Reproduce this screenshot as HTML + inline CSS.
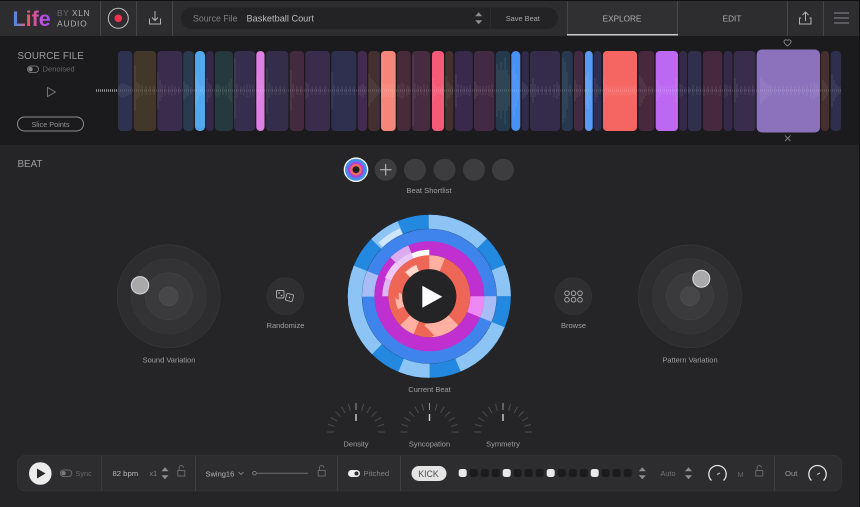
<!DOCTYPE html>
<html><head><meta charset="utf-8"><title>Life</title>
<style>
html,body{margin:0;padding:0;background:#252527;width:860px;height:507px;overflow:hidden}
svg{display:block;filter:blur(.3px)}
text{font-family:"Liberation Sans",sans-serif;font-size:7.5px;fill:#a0a0a2}
.m{text-anchor:middle}
</style></head><body>
<svg width="860" height="507" viewBox="0 0 860 507" xmlns="http://www.w3.org/2000/svg">
<defs>
<linearGradient id="lg" gradientUnits="userSpaceOnUse" x1="13" y1="0" x2="50" y2="0"><stop offset="0" stop-color="#3f8fe8"/><stop offset=".2" stop-color="#8a78c0"/><stop offset=".34" stop-color="#e0606a"/><stop offset=".52" stop-color="#e0507a"/><stop offset=".72" stop-color="#c84fd8"/><stop offset="1" stop-color="#9a50ee"/></linearGradient>
<g id="g" stroke="#4e4e50" stroke-width="1" fill="none">
<path d="M-29 0h7M29 0h-7"/>
<path transform="rotate(-75)" d="M0-29v7"/><path transform="rotate(-60)" d="M0-29v7"/><path transform="rotate(-45)" d="M0-29v7"/><path transform="rotate(-30)" d="M0-29v7"/><path transform="rotate(-15)" d="M0-29v7"/>
<path transform="rotate(15)" d="M0-29v7"/><path transform="rotate(30)" d="M0-29v7"/><path transform="rotate(45)" d="M0-29v7"/><path transform="rotate(60)" d="M0-29v7"/><path transform="rotate(75)" d="M0-29v7"/>
<path d="M0-29v7" stroke="#9a9a9a"/><path d="M0-18v7" stroke="#d0d0d0" stroke-width="1.400"/>
</g>
<g id="arrows" fill="#8e8e90"><path d="M-3.500-2 0-6 3.500-2z"/><path d="M-3.500 2 0 6 3.500 2z"/></g>
<g id="lock" fill="none" stroke="#6e6e70" stroke-width=".9"><rect x="-3.500" y="0" width="7" height="5.500"/><path d="M-2.200 0v-2.800a2.200 2.200 0 0 1 4.400 0"/></g>
</defs>

<rect width="860" height="507" fill="#252527"/>
<!-- top bar -->
<rect width="860" height="36" fill="#2d2d30"/>
<rect width="860" height="1" fill="#111"/>
<path d="M100.500 1v35M136.500 1v35M172.500 1v35M787.500 1v35M823.500 1v35" stroke="#47474a"/>
<text x="12.500" y="26" style="font-size:21.500px;font-weight:bold;fill:url(#lg)">Life</text>
<text x="57" y="16" style="font-size:8.500px;letter-spacing:.5px;fill:#6a6a6c">BY <tspan style="fill:#b0b0b2">XLN</tspan></text>
<text x="57" y="26.500" style="font-size:8.500px;letter-spacing:.7px;fill:#b0b0b2">AUDIO</text>
<circle cx="118.300" cy="18.300" r="10" fill="none" stroke="#bdbdbf"/><circle cx="118.300" cy="18.300" r="3.800" fill="#f4304f"/>
<g fill="none" stroke="#b4b4b6"><path d="M149.500 18.500v5.500h11v-5.500"/><path d="M155 11v9M152 17.500l3 3 3-3"/></g>
<rect x="181" y="7.500" width="377" height="21.500" rx="10.700" fill="#232325"/>
<path d="M490.500 8v21" stroke="#2d2d30"/>
<text x="193" y="21.500" style="font-size:8.800px;fill:#808082">Source File</text>
<text x="246.500" y="21.500" style="font-size:9.200px;fill:#bebec0">Basketball Court</text>
<use href="#arrows" transform="translate(478.700 18.300)"/>
<text x="522.800" y="20.800" class="m" style="font-size:7.400px;fill:#a8a8aa">Save Beat</text>
<rect x="567" y="1" width="110" height="33.500" fill="#303033"/>
<path d="M567.500 1v34M677.500 1v34" stroke="#47474a"/>
<rect x="567" y="34" width="111" height="1.500" fill="#c8c8ca"/>
<text x="622" y="21.500" class="m" style="font-size:8.200px;fill:#b0b0b2">EXPLORE</text>
<text x="732" y="21.500" class="m" style="font-size:8.200px;fill:#b0b0b2">EDIT</text>
<g fill="none" stroke="#b4b4b6"><path d="M801 18h-1.500v6h11.500v-6h-1.500"/><path d="M805.500 12v9M802.500 15l3-3 3 3"/></g>
<path d="M834 13h15M834 18h15M834 23h15" stroke="#7a7a7c" stroke-width="1.200"/>

<!-- source row -->
<rect y="36" width="860" height="110" fill="#1b1b1d"/>
<rect y="145.500" width="860" height="1" fill="#2c2c2e"/>
<text x="17.500" y="58.800" style="font-size:9.800px;fill:#9e9ea0;letter-spacing:.1px">SOURCE FILE</text>
<rect x="27.500" y="66" width="11" height="6.500" rx="3.250" fill="none" stroke="#88888a" stroke-width=".8"/><circle cx="30.500" cy="69.200" r="2.200" fill="#88888a"/>
<text x="42.500" y="71.500" style="font-size:7.600px;fill:#68686a">Denoised</text>
<path d="M47.500 87.500 55.500 92 47.500 96.500z" fill="none" stroke="#7e7e80" stroke-width=".9"/>
<rect x="17.500" y="117" width="66" height="14" rx="7" fill="none" stroke="#8e8e90"/>
<text x="50.500" y="126.800" class="m" style="font-size:7.300px;fill:#969698">Slice Points</text>

<g>
<rect x="118" y="51" width="14.300" height="80" rx="4" fill="#2e3250"/>
<rect x="133.700" y="51" width="22.300" height="80" rx="4" fill="#433729"/>
<rect x="157.300" y="51" width="25" height="80" rx="4" fill="#3a2c4c"/>
<rect x="183.300" y="51" width="10.500" height="80" rx="4" fill="#2a3a50"/>
<rect x="195" y="51" width="10" height="80" rx="4.500" fill="#52a8ee"/>
<rect x="206" y="51" width="7.500" height="80" rx="3.500" fill="#35294a"/>
<rect x="215" y="51" width="18" height="80" rx="4" fill="#243a3e"/>
<rect x="234" y="51" width="21" height="80" rx="4" fill="#352e4d"/>
<rect x="256.300" y="51" width="8.200" height="80" rx="4" fill="#df80e5"/>
<rect x="265.700" y="51" width="22.700" height="80" rx="4" fill="#352e4b"/>
<rect x="289.700" y="51" width="14.300" height="80" rx="4" fill="#432a3e"/>
<rect x="305.300" y="51" width="24.700" height="80" rx="4" fill="#3a2c4c"/>
<rect x="331.300" y="51" width="25" height="80" rx="4" fill="#2f2f50"/>
<rect x="357.700" y="51" width="9.300" height="80" rx="4" fill="#432a50"/>
<rect x="368.300" y="51" width="11.500" height="80" rx="4" fill="#43302f"/>
<rect x="381" y="51" width="14.700" height="80" rx="4" fill="#f7867a"/>
<rect x="397" y="51" width="13.700" height="80" rx="4" fill="#472b38"/>
<rect x="412" y="51" width="18" height="80" rx="4" fill="#472b40"/>
<rect x="432" y="51" width="12" height="80" rx="4" fill="#f55a78"/>
<rect x="445.300" y="51" width="8" height="80" rx="4" fill="#46302f"/>
<rect x="454.700" y="51" width="18" height="80" rx="4" fill="#392a4c"/>
<rect x="474" y="51" width="20.300" height="80" rx="4" fill="#432a44"/>
<rect x="495.700" y="51" width="14.300" height="80" rx="4" fill="#243a4c"/>
<rect x="511.300" y="51" width="9" height="80" rx="4.500" fill="#4790f5"/>
<rect x="521.700" y="51" width="7" height="80" rx="3.500" fill="#322a4c"/>
<rect x="530" y="51" width="30" height="80" rx="4" fill="#352c4c"/>
<rect x="561.700" y="51" width="11" height="80" rx="4" fill="#273850"/>
<rect x="574" y="51" width="9.300" height="80" rx="4" fill="#432a44"/>
<rect x="585" y="51" width="7.700" height="80" rx="3.800" fill="#5a9af5"/>
<rect x="594" y="51" width="7.300" height="80" rx="3.500" fill="#2c3050"/>
<rect x="603" y="51" width="34" height="80" rx="4" fill="#f56663"/>
<rect x="638.300" y="51" width="16" height="80" rx="4" fill="#47283c"/>
<rect x="655.700" y="51" width="22.300" height="80" rx="4" fill="#bd68f2"/>
<rect x="679.300" y="51" width="7.700" height="80" rx="3.500" fill="#35294a"/>
<rect x="688" y="51" width="13.300" height="80" rx="4" fill="#30304e"/>
<rect x="703" y="51" width="19.300" height="80" rx="4" fill="#46283f"/>
<rect x="723.700" y="51" width="8.700" height="80" rx="4" fill="#35294a"/>
<rect x="733.700" y="51" width="21.700" height="80" rx="4" fill="#3a2c4c"/>
<rect x="756.700" y="49.500" width="63.300" height="83" rx="5" fill="#8c72bd"/>
<rect x="821" y="51" width="8" height="80" rx="4" fill="#472f30"/>
<rect x="830.700" y="51" width="10.300" height="80" rx="4" fill="#2e2f4e"/>
</g>
<!-- waveform -->
<path d="M96 90.500H118" stroke="#9a9a9c" stroke-width="2.500" stroke-dasharray="1 1"/>
<path d="M118 90.500H842" stroke="#fff" stroke-opacity=".16" stroke-width="2" stroke-dasharray="1 1"/>
<path stroke="#fff" stroke-opacity=".14" stroke-width=".8" fill="none" d="M119 85v11M121 84v13M123 83v15M125 84v13M127 85v11M129 86v9M131 87v7M135 65v46M137 82v17M139 84v13M142 85v11M146 86v9M150 86v9M154 86v9M158 72v37M160 80v21M162 84v13M165 85v11M169 86v9M172 85v11M175 86v9M179 87v7M184 81v19M186 84v13M188 85v11M191 87v7M196 76v29M198 80v21M200 85v11M202 87v7M204 86v9M207 78v25M209 83v15M211 85v11M216 85v11M218 84v13M220 86v9M223 86v9M226 85v11M229 82v17M231 79v23M235 58v61M237 84v13M241 86v9M244 85v11M247 84v13M250 84v13M253 85v11M257 76v29M259 80v21M261 85v11M263 87v7M267 68v45M269 83v15M272 86v9M276 86v9M280 86v9M284 87v7M291 70v41M293 84v13M297 86v9M301 86v9M306 82v17M308 84v13M312 86v9M316 86v9M320 86v9M325 86v9M332 72v37M334 85v11M338 86v9M342 86v9M346 86v9M350 86v9M354 86v9M359 86v9M361 85v11M363 84v13M365 86v9M369 74v33M371 78v25M373 80v21M375 83v15M377 85v11M379 87v7M382 83v15M384 84v13M386 84v13M388 84v13M390 84v13M392 84v13M394 84v13M398 85v11M400 84v13M402 82v17M404 84v13M407 85v11M409 86v9M413 55v71M415 83v15M418 85v11M421 86v9M424 84v13M427 85v11M433 78v25M435 85v11M437 87v7M439 87v7M441 87v7M443 85v11M446 76v31M448 82v17M450 84v13M452 86v9M456 74v33M458 84v13M461 85v11M464 86v9M467 86v9M470 85v11M475 82v17M477 85v11M480 86v9M483 86v9M486 86v9M489 85v11M492 84v13M497 64v53M499 70v41M501 62v57M503 70v41M505 57v67M507 70v41M509 75v31M512 70v41M514 64v53M516 74v33M518 80v21M523 82v17M525 84v13M527 86v9M531 84v13M533 78v25M535 84v13M538 86v9M542 86v9M546 86v9M550 86v9M554 84v13M557 82v17M559 85v11M563 58v65M565 62v57M567 72v37M570 85v11M575 80v21M577 84v13M580 85v11M586 76v29M588 72v37M590 80v21M595 78v25M597 84v13M600 87v7M604 79v23M606 84v13M608 86v9M610 86v9M612 86v9M614 86v9M616 86v9M618 86v9M620 86v9M622 86v9M624 86v9M626 86v9M628 86v9M630 86v9M632 86v9M634 86v9M636 85v11M640 75v31M642 78v25M644 82v17M646 85v11M649 86v9M652 87v7M659 84v13M657 80v21M661 85v11M664 86v9M667 86v9M670 86v9M673 85v11M676 78v25M680 84v13M682 85v11M685 87v7M689 87v7M693 85v11M697 86v9M700 86v9M704 85v11M708 86v9M712 86v9M716 86v9M720 85v11M725 84v13M727 85v11M730 86v9M735 78v25M737 84v13M741 86v9M745 86v9M749 86v9M753 85v11M761 77v27M763 80v21M765 82v17M767 84v13M769 85v11M771 86v9M775 86v9M779 86v9M783 86v9M787 86v9M791 86v9M795 86v9M799 86v9M803 86v9M807 85v11M811 83v15M814 82v17M816 84v13M818 85v11M823 80v21M825 82v17M827 85v11M832 74v33M834 80v21M836 84v13M838 86v9M840 87v7"/>
<path d="M787.500 40.500c-1.200-1.400-3.500-.6-3.500 1.200 0 1.500 2 3 3.500 4.300 1.500-1.300 3.500-2.800 3.500-4.300 0-1.800-2.300-2.600-3.500-1.200z" fill="none" stroke="#98989a" stroke-width=".8"/>
<path d="M785 135.500l5.500 5.500M790.500 135.500l-5.500 5.500" stroke="#98989a" stroke-width=".8"/>

<!-- beat -->
<text x="17.500" y="167" style="font-size:9.800px;fill:#9e9ea0">BEAT</text>
<circle cx="356" cy="169.700" r="12.300" fill="#fff"/>
<circle cx="356" cy="169.700" r="11" fill="#3f8ee8"/><circle cx="356" cy="169.700" r="8" fill="#b040d8"/><circle cx="356" cy="169.700" r="5.800" fill="#ee6a60"/><circle cx="356" cy="169.700" r="3.500" fill="#1f1f21"/>
<circle cx="385.700" cy="169.700" r="11" fill="#3d3d3f"/><path d="M380 169.700h11.500M385.700 164v11.500" stroke="#c8c8ca" stroke-width="1"/>
<circle cx="415" cy="169.700" r="11" fill="#3d3d3f"/><circle cx="444.500" cy="169.700" r="11" fill="#3d3d3f"/><circle cx="474" cy="169.700" r="11" fill="#3d3d3f"/><circle cx="503" cy="169.700" r="11" fill="#3d3d3f"/>
<text x="429" y="193" class="m" style="font-size:7.600px">Beat Shortlist</text>

<!-- pads -->
<g stroke="#3a3a3c" stroke-width=".6">
<circle cx="168.700" cy="296.300" r="51.500" fill="#2d2d2f"/><circle cx="168.700" cy="296.300" r="37.500" fill="#333335"/><circle cx="168.700" cy="296.300" r="23.500" fill="#3a3a3c" stroke="#444"/><circle cx="168.700" cy="296.300" r="9.500" fill="#474749" stroke="#505052"/>
<circle cx="690" cy="296.300" r="51.500" fill="#2d2d2f"/><circle cx="690" cy="296.300" r="37.500" fill="#333335"/><circle cx="690" cy="296.300" r="23.500" fill="#3a3a3c" stroke="#444"/><circle cx="690" cy="296.300" r="9.500" fill="#474749" stroke="#505052"/>
</g>
<circle cx="140" cy="285.300" r="8.700" fill="#a9a9a9" stroke="#dcdcdc" stroke-width="1"/>
<circle cx="701.300" cy="278.700" r="8.500" fill="#a9a9a9" stroke="#dcdcdc" stroke-width="1"/>
<text x="169" y="362.500" class="m">Sound Variation</text>
<text x="690" y="362.500" class="m">Pattern Variation</text>
<circle cx="285.300" cy="296.300" r="18.500" fill="#2f2f31" stroke="#363638" stroke-width=".6"/>
<circle cx="573.300" cy="296.300" r="18.500" fill="#2f2f31" stroke="#363638" stroke-width=".6"/>
<rect x="276.500" y="290.500" width="7.500" height="7.500" rx="1.200" fill="none" stroke="#b0b0b2" stroke-width=".9"/><circle cx="279" cy="293" r=".8" fill="#c8c8ca"/><circle cx="281.500" cy="295.500" r=".8" fill="#c8c8ca"/>
<rect x="286" y="294" width="7" height="7" rx="1.200" transform="rotate(15 289.500 297.500)" fill="none" stroke="#b0b0b2" stroke-width=".9"/><circle cx="289.500" cy="297.500" r=".7" fill="#c8c8ca"/>
<text x="285.500" y="328" class="m">Randomize</text>
<g fill="none" stroke="#aeaeb0" stroke-width=".9"><circle cx="567" cy="293.300" r="2.300"/><circle cx="573.500" cy="293.300" r="2.300"/><circle cx="580" cy="293.300" r="2.300"/><circle cx="567" cy="299.800" r="2.300"/><circle cx="573.500" cy="299.800" r="2.300"/><circle cx="580" cy="299.800" r="2.300"/></g>
<text x="573.500" y="328" class="m">Browse</text>

<!-- beat wheel -->
<g fill="none" transform="rotate(-90 429.300 296.300)">
<circle cx="429.300" cy="296.300" r="74.500" stroke="#2288e0" stroke-width="14"/>
<circle cx="429.300" cy="296.300" r="74.500" stroke="#8cc4f5" stroke-width="14" pathLength="360" stroke-dasharray="45 22.500 22.500 22.500 45 22.500 22.500 22.500 67.500 22.500 22.500 22.500"/>
<circle cx="429.300" cy="296.300" r="71" stroke="#cfe6fb" stroke-width="6" pathLength="360" stroke-dasharray="20 340" stroke-dashoffset="-317"/>
<circle cx="429.300" cy="296.300" r="61" stroke="#3e84ec" stroke-width="12.500"/>
<circle cx="429.300" cy="296.300" r="61" stroke="#a8bcf6" stroke-width="12.500" pathLength="360" stroke-dasharray="22.500 337.500" stroke-dashoffset="-90"/>
<circle cx="429.300" cy="296.300" r="61" stroke="#a8bcf6" stroke-width="12.500" pathLength="360" stroke-dasharray="22.500 337.500" stroke-dashoffset="-270"/>
<circle cx="429.300" cy="296.300" r="48" stroke="#c030d0" stroke-width="14"/>
<circle cx="429.300" cy="296.300" r="48" stroke="#ee88f5" stroke-width="14" pathLength="360" stroke-dasharray="22.500 337.500" stroke-dashoffset="-90"/>
<circle cx="429.300" cy="296.300" r="48" stroke="#dcaaf0" stroke-width="14" pathLength="360" stroke-dasharray="22.500 337.500" stroke-dashoffset="-315"/>
<circle cx="429.300" cy="296.300" r="44" stroke="#e8c8f6" stroke-width="6" pathLength="360" stroke-dasharray="22.500 337.500" stroke-dashoffset="-315"/>
<circle cx="429.300" cy="296.300" r="44.500" stroke="#f0c8f8" stroke-width="7" pathLength="360" stroke-dasharray="22.500 337.500" stroke-dashoffset="-292.500"/>
<circle cx="429.300" cy="296.300" r="44" stroke="#e0b4f0" stroke-width="6" pathLength="360" stroke-dasharray="22.500 337.500" stroke-dashoffset="-270"/>
<circle cx="429.300" cy="296.300" r="43.500" stroke="#fff" stroke-width="6" pathLength="360" stroke-dasharray="22.500 337.500" stroke-dashoffset="-337.500"/>
<circle cx="429.300" cy="296.300" r="34" stroke="#ee6655" stroke-width="14"/>
<circle cx="429.300" cy="296.300" r="34" stroke="#ffb0a2" stroke-width="14" pathLength="360" stroke-dasharray="22.500 112.500 45 22.500 22.500 135"/>
<circle cx="429.300" cy="296.300" r="30.500" stroke="#ffb8a8" stroke-width="7" pathLength="360" stroke-dasharray="22.500 337.500" stroke-dashoffset="-247.500"/>
<circle cx="429.300" cy="296.300" r="30.500" stroke="#ffd8cc" stroke-width="7" pathLength="360" stroke-dasharray="22.500 337.500" stroke-dashoffset="-315"/>
</g>
<circle cx="429.300" cy="296.300" r="27" fill="#242426"/>
<path d="M422.300 285.700 442.300 296.700 422.300 307.700z" fill="#fff"/>
<text x="429.500" y="392" class="m">Current Beat</text>

<!-- gauges -->
<use href="#g" transform="translate(356 432)"/>
<use href="#g" transform="translate(429.500 432)"/>
<use href="#g" transform="translate(503 432)"/>
<text x="356" y="446.500" class="m">Density</text>
<text x="429.500" y="446.500" class="m">Syncopation</text>
<text x="503" y="446.500" class="m">Symmetry</text>

<!-- bottom bar -->
<rect x="17.500" y="455.500" width="824" height="35.500" rx="8" fill="#2d2d30" stroke="#353538" stroke-width=".8"/>
<path d="M101.500 456v35M195.500 456v35M337.500 456v35M400.500 456v35M774.500 456v35" stroke="#3f3f42"/>
<circle cx="40.300" cy="473.500" r="11.300" fill="#ececec"/><path d="M37 468.500 45.500 473.500 37 478.500z" fill="#2a2a2c"/>
<rect x="60.300" y="470" width="11.500" height="6.500" rx="3.250" fill="none" stroke="#7a7a7c" stroke-width=".8"/><circle cx="63.500" cy="473.200" r="2.200" fill="#7a7a7c"/>
<text x="75.500" y="476" style="font-size:7.300px;fill:#68686a">Sync</text>
<text x="112.500" y="476" style="font-size:7.700px;fill:#b8b8ba">82 bpm</text>
<text x="149.500" y="476" style="font-size:7.300px;fill:#7c7c7e">x1</text>
<use href="#arrows" transform="translate(165 473.300)"/>
<use href="#lock" transform="translate(181.300 470.500)"/>
<text x="205.500" y="476.300" style="font-size:7.500px;fill:#b6b6b8">Swing16</text>
<path d="M238.500 472l2.500 2.500 2.500-2.500" fill="none" stroke="#8e8e90" stroke-width=".8"/>
<circle cx="254.500" cy="473.200" r="1.800" fill="none" stroke="#8e8e90" stroke-width=".8"/>
<path d="M257 473.200h51" stroke="#6e6e70" stroke-width="1"/>
<use href="#lock" transform="translate(321.700 470.500)"/>
<rect x="348" y="470" width="12" height="7" rx="3.500" fill="#eee"/><circle cx="356.500" cy="473.500" r="2" fill="#2d2d30"/>
<text x="363.500" y="476" style="font-size:7.700px;fill:#808082">Pitched</text>
<rect x="411.500" y="466" width="35" height="15" rx="7.500" fill="#e4e4e4"/>
<text x="428.500" y="476.800" class="m" style="font-size:8.800px;fill:#505052">KICK</text>
<g fill="#1b1b1d">
<rect x="458.700" y="469" width="8" height="8" rx="2.500" fill="#eaeaea"/><rect x="469.700" y="469" width="8" height="8" rx="2.500"/><rect x="480.700" y="469" width="8" height="8" rx="2.500"/><rect x="491.700" y="469" width="8" height="8" rx="2.500"/>
<rect x="502.700" y="469" width="8" height="8" rx="2.500" fill="#eaeaea"/><rect x="513.700" y="469" width="8" height="8" rx="2.500"/><rect x="524.700" y="469" width="8" height="8" rx="2.500"/><rect x="535.700" y="469" width="8" height="8" rx="2.500"/>
<rect x="546.700" y="469" width="8" height="8" rx="2.500" fill="#eaeaea"/><rect x="557.700" y="469" width="8" height="8" rx="2.500"/><rect x="568.700" y="469" width="8" height="8" rx="2.500"/><rect x="579.700" y="469" width="8" height="8" rx="2.500"/>
<rect x="590.700" y="469" width="8" height="8" rx="2.500" fill="#eaeaea"/><rect x="601.700" y="469" width="8" height="8" rx="2.500"/><rect x="612.700" y="469" width="8" height="8" rx="2.500"/><rect x="623.700" y="469" width="8" height="8" rx="2.500"/>
</g>
<use href="#arrows" transform="translate(642.300 473.300)"/>
<text x="660.500" y="476" style="font-size:7.300px;fill:#747476">Auto</text>
<use href="#arrows" transform="translate(688.500 473.300)"/>
<path d="M711.500 480.500a8.700 8.700 0 1 1 12 0" fill="none" stroke="#e2e2e2" stroke-width="1.300"/><path d="M717 474.500l3-1.500" stroke="#c0c0c2" stroke-width="1"/>
<text x="740.500" y="477" class="m" style="font-size:7.300px;fill:#68686a">M</text>
<use href="#lock" transform="translate(759.300 470.500)"/>
<text x="785" y="476" style="font-size:7.700px;fill:#989898">Out</text>
<path d="M811.500 480.500a8.700 8.700 0 1 1 12 0" fill="none" stroke="#e2e2e2" stroke-width="1.300"/><path d="M817 474.500l3-1.500" stroke="#c0c0c2" stroke-width="1"/>
<rect x="859" y="0" width="1" height="507" fill="#111"/>
</svg>
</body></html>
